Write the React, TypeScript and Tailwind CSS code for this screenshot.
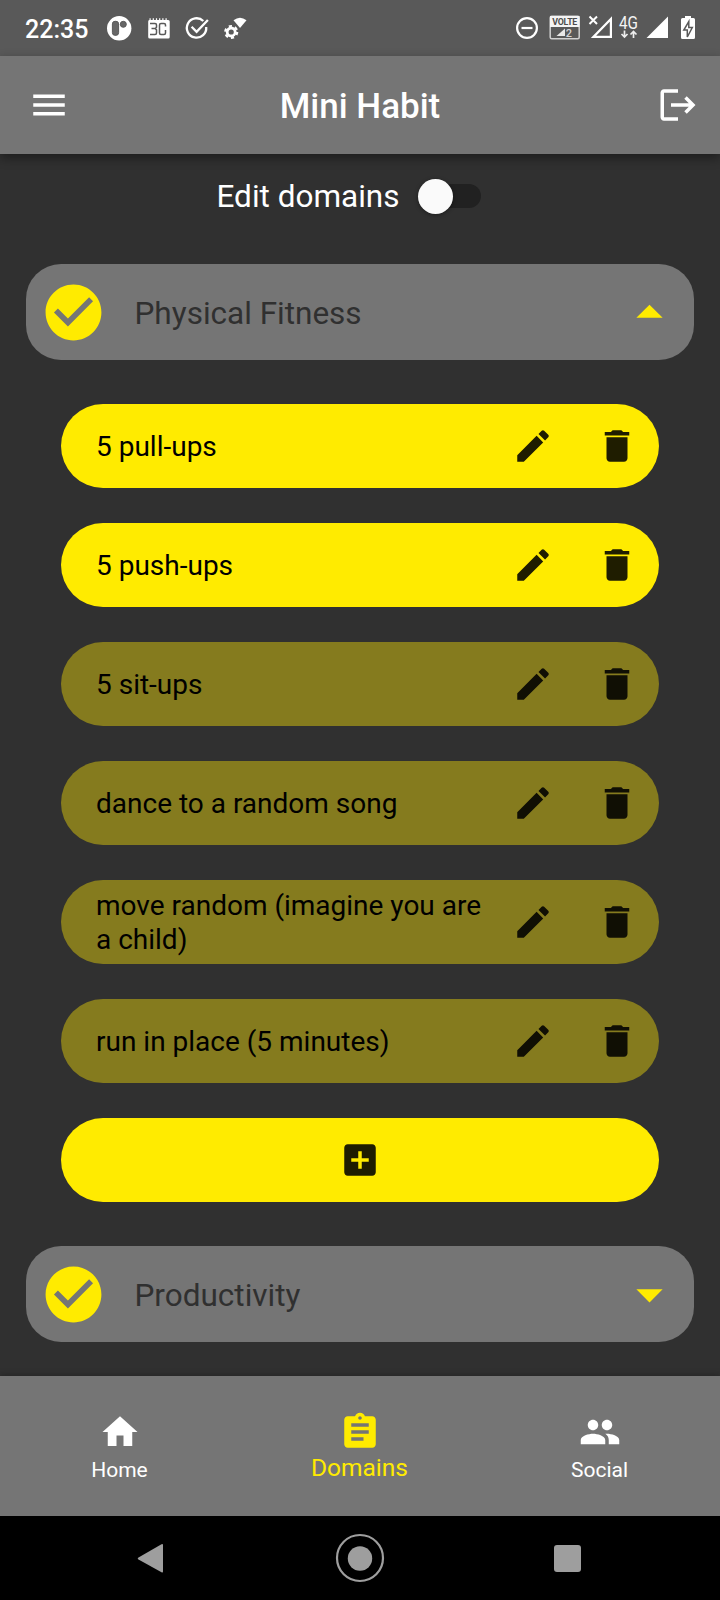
import type { ReactNode } from "react";

type IconProps = { d: string; className: string };

const Icon = ({ d, className }: IconProps) => (
  <svg viewBox="0 0 24 24" fill="currentColor" className={className}>
    <path d={d} />
  </svg>
);

const paths = {
  menu: "M3 18h18v-2H3v2zm0-5h18v-2H3v2zm0-7v2h18V6H3z",
  logout:
    "M17 7l-1.41 1.41L18.17 11H8v2h10.17l-2.58 2.58L17 17l5-5zM4 5h8V3H4c-1.1 0-2 .9-2 2v14c0 1.1.9 2 2 2h8v-2H4V5z",
  check:
    "M12 2C6.48 2 2 6.48 2 12s4.48 10 10 10 10-4.48 10-10S17.52 2 12 2zm-2 15l-5-5 1.41-1.41L10 14.17l7.59-7.59L19 8l-9 9z",
  up: "M7 14l5-5 5 5z",
  down: "M7 10l5 5 5-5z",
  edit: "M3 17.25V21h3.75L17.81 9.94l-3.75-3.75L3 17.25zM20.71 7.04c.39-.39.39-1.02 0-1.41l-2.34-2.34c-.39-.39-1.02-.39-1.41 0l-1.83 1.83 3.75 3.75 1.83-1.83z",
  trash: "M6 19c0 1.1.9 2 2 2h8c1.1 0 2-.9 2-2V7H6v12zM19 4h-3.5l-1-1h-5l-1 1H5v2h14V4z",
  addBox:
    "M19 3H5c-1.11 0-2 .9-2 2v14c0 1.1.89 2 2 2h14c1.1 0 2-.9 2-2V5c0-1.1-.9-2-2-2zm-2 10h-4v4h-2v-4H7v-2h4V7h2v4h4v2z",
  home: "M10 20v-6h4v6h5v-8h3L12 3 2 12h3v8z",
  domains:
    "M19 3h-4.18C14.4 1.84 13.3 1 12 1c-1.3 0-2.4.84-2.82 2H5c-1.1 0-2 .9-2 2v14c0 1.1.9 2 2 2h14c1.1 0 2-.9 2-2V5c0-1.1-.9-2-2-2zm-7 0c.55 0 1 .45 1 1s-.45 1-1 1-1-.45-1-1 .45-1 1-1zm2 14H7v-2h7v2zm3-4H7v-2h10v2zm0-4H7V7h10v2z",
  people:
    "M16 11c1.66 0 2.99-1.34 2.99-3S17.66 5 16 5c-1.66 0-3 1.34-3 3s1.34 3 3 3zm-8 0c1.66 0 2.99-1.34 2.99-3S9.66 5 8 5C6.34 5 5 6.34 5 8s1.34 3 3 3zm0 2c-2.33 0-7 1.17-7 3.5V19h14v-2.5c0-2.33-4.67-3.5-7-3.5zm8 0c-.29 0-.62.02-.97.05 1.16.84 1.97 1.97 1.97 3.45V19h6v-2.5c0-2.33-4.67-3.5-7-3.5z",
};

const habits = [
  { name: "5 pull-ups", active: true },
  { name: "5 push-ups", active: true },
  { name: "5 sit-ups", active: false },
  { name: "dance to a random song", active: false },
  { name: "move random (imagine you are a child)", active: false },
  { name: "run in place (5 minutes)", active: false },
];

function StatusBar() {
  return (
    <div className="flex h-14 items-center justify-between bg-[#595959] pl-[25px] pr-[24px] text-white">
      <div className="flex items-center">
        <span className="w-[82px] pt-[2px] text-[25px] font-medium leading-none">22:35</span>
        <svg viewBox="0 0 142 26" className="h-[26px] w-[142px]" fill="none">
          <circle cx="12.2" cy="13.3" r="12.2" fill="#fff" />
          <rect x="5.4" y="6.300" width="6.200" height="14" rx="2.600" fill="#666" stroke="#595959" />
          <circle cx="16.300" cy="9.300" r="3" fill="#666" stroke="#595959" />
          <path
            fill="#fff"
            d="M41.500 5h1V3.200h1.200V5h2V3.200h1.200V5h2V3.200h1.200V5h2V3.200h1.200V5h2V3.200h1.200V5h2V3.200h1.200V5h1.500q1.500 0 1.500 1.500v15.500q0 1.500-1.500 1.500h-18.500q-1.500 0-1.500-1.500v-15.500q0-1.500 1-1.500z"
          />
          <path
            d="M43 8.500h5q1.500 0 1.500 1.500v2.300l-1.200 1.300 1.200 1.300v3q0 1.500-1.500 1.500h-5M44.500 13.600h3.500M54 8.500h3q1.500 0 1.500 1.500v1.500M58.500 15v3q0 1.500-1.500 1.500h-3q-1.500 0-1.500-1.500v-8q0-1.500 1.500-1.500"
            stroke="#595959"
            strokeWidth="1.500"
          />
          <path
            d="M96.300 6A9.700 9.700 0 1 0 99.200 12M84.600 11.800l5 5 11.300-11.800"
            stroke="#fff"
            strokeWidth="2.300"
          />
          <circle cx="124.200" cy="17" r="4" stroke="#fff" strokeWidth="2.800" />
          <circle cx="124.200" cy="17" r="6" stroke="#fff" strokeWidth="2.200" strokeDasharray="3.140 3.140" />
          <path d="M126.500 5.300q6.500-5 13 0l-6.500 7.700z" fill="#fff" />
        </svg>
      </div>
      <svg viewBox="516 0 180 56" className="h-14 w-[180px]" fill="none">
        <circle cx="527" cy="28" r="9.900" stroke="#fff" strokeWidth="2.200" />
        <path d="M521.500 28h11" stroke="#fff" strokeWidth="2.200" />
        <rect x="550.200" y="16.200" width="29" height="22.500" rx="1.500" stroke="#d0d0d0" strokeWidth="1.500" />
        <path d="M550 16h29.500v11H550z" fill="#f4f4f4" />
        <text x="564.800" y="25.200" textAnchor="middle" fontSize="8.800" fontWeight="700" fill="#4d4d4d" textLength="25">
          VOLTE
        </text>
        <path d="M556.500 36l8.500-7.500V36z" fill="#e8e8e8" />
        <text x="565.800" y="36.500" fontSize="11" fontWeight="500" fill="#d4d4d4">
          2
        </text>
        <path d="M610.900 19v17.900h-17.500z" stroke="#fff" strokeWidth="2.200" />
        <path d="M589.500 16.500l7.500 7.500m0-7.500l-7.500 7.500" stroke="#fff" strokeWidth="2" />
        <text x="619" y="28.800" fontSize="17.500" fill="#f4f4f4" textLength="19" lengthAdjust="spacingAndGlyphs">
          4G
        </text>
        <path d="M624.500 30.500v6m-3-2.500l3 3 3-3M633.500 38v-6m-3 2.500l3-3 3 3" stroke="#eee" strokeWidth="1.700" />
        <path d="M668 16.500V38h-21.500z" fill="#fff" />
        <path
          d="M685 16h6v2h2.500q1.500 0 1.500 1.500v18q0 1.500-1.500 1.500h-11q-1.500 0-1.500-1.500v-18q0-1.500 1.500-1.500h2.500z"
          fill="#fff"
        />
        <path d="M688.800 21.500v6h3.500l-5 9.500v-7h-3.500z" stroke="#595959" strokeWidth="1.500" />
      </svg>
    </div>
  );
}

function DomainCard({ title, open }: { title: string; open: boolean }) {
  return (
    <div className="mx-[26px] flex h-24 shrink-0 items-center rounded-[35px] bg-[#757575] pl-[14px] pr-[13px] pt-px">
      <Icon d={paths.check} className="size-[67px] text-[#ffeb00]" />
      <span className="ml-[27.500px] flex-1 pt-[2px] text-[31.500px] leading-none text-[#303030]">{title}</span>
      <Icon d={open ? paths.up : paths.down} className="size-[63px] text-[#ffeb00]" />
    </div>
  );
}

function HabitRow({ name, active }: { name: string; active: boolean }) {
  return (
    <div
      className={
        active
          ? "flex h-21 items-center rounded-full bg-[#ffeb00] pl-[35px] pr-[21px] text-[#1f1d00]"
          : "flex h-21 items-center rounded-full bg-[#857b1e] pl-[35px] pr-[21px] text-[#100f04]"
      }
    >
      <span className="w-[400px] pt-[2px] text-[28px] leading-[34px] text-black">{name}</span>
      <Icon d={paths.edit} className="ml-[15.500px] size-[42px]" />
      <Icon d={paths.trash} className="ml-auto size-[42px]" />
    </div>
  );
}

function Tab({ children, icon, selected }: { children: ReactNode; icon: string; selected?: boolean }) {
  return (
    <div
      className={
        selected
          ? "flex flex-1 flex-col items-center pt-[35px] text-[#ffeb00]"
          : "flex flex-1 flex-col items-center pt-[35px] text-white"
      }
    >
      <Icon d={icon} className="size-[42px]" />
      <span className={selected ? "pr-px text-[24.500px] leading-[30px]" : "pr-px text-[21px] leading-[34px]"}>
        {children}
      </span>
    </div>
  );
}

export default function App() {
  return (
    <div className="flex h-[1600px] w-[720px] flex-col overflow-hidden bg-[#303030] font-['Roboto',sans-serif]">
      <StatusBar />
      <header className="z-10 flex h-[98px] items-center justify-between bg-[#757575] pl-[28px] pr-[21px] text-white shadow-[0_4px_10px_rgba(0,0,0,0.4)]">
        <Icon d={paths.menu} className="size-[42px]" />
        <h1 className="pr-[7px] pt-[2px] text-[35px] font-medium leading-none">Mini Habit</h1>
        <Icon d={paths.logout} className="size-[42px]" />
      </header>
      <div className="flex h-[110px] items-start pl-[216.500px] pt-[22px] text-white">
        <span className="pt-px text-[31.500px] leading-[40px]">Edit domains</span>
        <div className="ml-[18.500px] flex h-10 items-center">
          <div className="flex h-6 w-[63px] items-center rounded-full bg-[#212121]">
            <div className="size-[35px] shrink-0 rounded-full bg-[#fafafa] shadow-[0_1px_4px_rgba(0,0,0,0.4)]" />
          </div>
        </div>
      </div>
      <DomainCard title="Physical Fitness" open />
      <div className="mx-[61px] my-11 flex flex-col gap-[35px]">
        {habits.map((habit) => (
          <HabitRow key={habit.name} name={habit.name} active={habit.active} />
        ))}
        <div className="flex h-21 items-center justify-center rounded-full bg-[#ffeb00]">
          <Icon d={paths.addBox} className="size-[42px] text-[#1f1d00]" />
        </div>
      </div>
      <DomainCard title="Productivity" open={false} />
      <nav className="mt-auto flex h-[140px] bg-[#757575] shadow-[0_-2px_6px_rgba(0,0,0,0.2)]">
        <Tab icon={paths.home}>Home</Tab>
        <Tab icon={paths.domains} selected>
          Domains
        </Tab>
        <Tab icon={paths.people}>Social</Tab>
      </nav>
      <div className="flex h-21 items-center justify-between bg-black pl-[137px] pr-[139px] text-[#9e9e9e]">
        <svg viewBox="0 0 28 30" className="h-[30px] w-7" fill="currentColor">
          <path d="M1.500 14.500L24.500 1.300q1.500-.8 1.500.8v26.400q0 1.600-1.500.8L1.500 16.500q-1.500-1 0-2z" />
        </svg>
        <svg viewBox="0 0 50 50" className="size-[50px]" fill="none">
          <circle cx="25" cy="25" r="23" stroke="currentColor" strokeWidth="2.200" />
          <circle cx="25" cy="25.500" r="12.200" fill="currentColor" />
        </svg>
        <div className="size-[27px] rounded-[3px] bg-[#9e9e9e]" />
      </div>
    </div>
  );
}
